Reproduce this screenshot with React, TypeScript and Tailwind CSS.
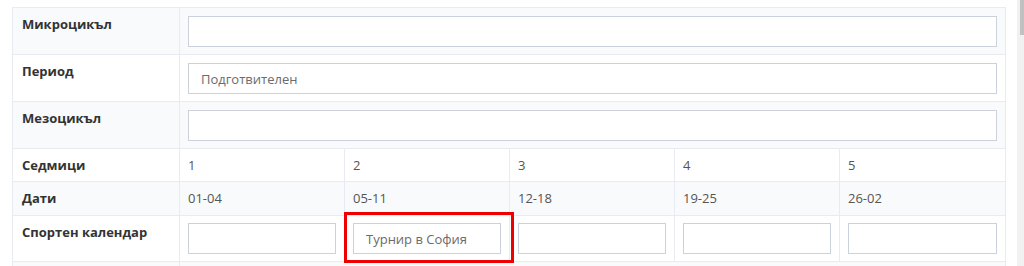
import React from 'react';

const weeks = ['1', '2', '3', '4', '5'];
const dates = ['01-04', '05-11', '12-18', '19-25', '26-02'];

function Label({ children }: { children: React.ReactNode }) {
    return (
        <td className="w-[167px] border border-[#e8ebf1] px-[9px] pt-[7px] align-top font-bold text-[13px] text-[#333]">
            {children}
        </td>
    );
}

function Field({ value }: { value?: string }) {
    return (
        <input
            readOnly
            value={value ?? ''}
            className="block w-full h-[31px] border border-[#cdd1dc] bg-white px-3 text-[13px] text-[#6b6b6b] outline-none"
        />
    );
}

export default function App() {
    return (
        <div
            className="flex w-[1024px] h-[266px] overflow-hidden bg-white"
            style={{ fontFamily: '"Open Sans", "Noto Sans", sans-serif' }}
        >
            <div className="flex-1 pl-3 pt-[7px]">
                <div className="relative w-[993px]">
                    <table className="w-[993px] table-fixed border-collapse">
                        <colgroup>
                            <col className="w-[167px]" />
                            <col className="w-[165px]" />
                            <col className="w-[165px]" />
                            <col className="w-[165px]" />
                            <col className="w-[165px]" />
                            <col className="w-[166px]" />
                        </colgroup>
                        <tbody>
                            <tr className="h-[47px] bg-[#f9fafc]">
                                <Label>Микроцикъл</Label>
                                <td colSpan={5} className="border border-[#e8ebf1] px-2 align-top pt-2">
                                    <Field />
                                </td>
                            </tr>
                            <tr className="h-[47px] bg-white">
                                <Label>Период</Label>
                                <td colSpan={5} className="border border-[#e8ebf1] px-2 align-top pt-2">
                                    <Field value="Подготвителен" />
                                </td>
                            </tr>
                            <tr className="h-[47px] bg-[#f9fafc]">
                                <Label>Мезоцикъл</Label>
                                <td colSpan={5} className="border border-[#e8ebf1] px-2 align-top pt-2">
                                    <Field />
                                </td>
                            </tr>
                            <tr className="h-[33px] bg-white">
                                <Label>Седмици</Label>
                                {weeks.map((w) => (
                                    <td key={w} className="border border-[#e8ebf1] px-2 pt-[7px] align-top text-[13px] text-[#555]">
                                        {w}
                                    </td>
                                ))}
                            </tr>
                            <tr className="h-[34px] bg-[#f9fafc]">
                                <Label>Дати</Label>
                                {dates.map((d) => (
                                    <td key={d} className="border border-[#e8ebf1] px-2 pt-[7px] align-top text-[13px] text-[#555]">
                                        {d}
                                    </td>
                                ))}
                            </tr>
                            <tr className="h-[46px] bg-white">
                                <Label>Спортен календар</Label>
                                {weeks.map((w) => (
                                    <td key={w} className="border border-[#e8ebf1] px-2 pt-[7px] align-top">
                                        <Field value={w === '2' ? 'Турнир в София' : ''} />
                                    </td>
                                ))}
                            </tr>
                            <tr className="h-[20px] bg-[#f9fafc]">
                                <td className="border border-[#e8ebf1]" />
                                <td colSpan={5} className="border border-[#e8ebf1]" />
                            </tr>
                        </tbody>
                    </table>
                    <div className="absolute left-[332px] top-[205px] w-[170px] h-[51px] border-[3px] border-[#ee0000]" />
                </div>
            </div>
            <div className="w-[7px] bg-[#f1f1f1] flex justify-end">
                <div className="w-[4px] h-[35px] bg-[#c1c1c1]" />
            </div>
        </div>
    );
}
